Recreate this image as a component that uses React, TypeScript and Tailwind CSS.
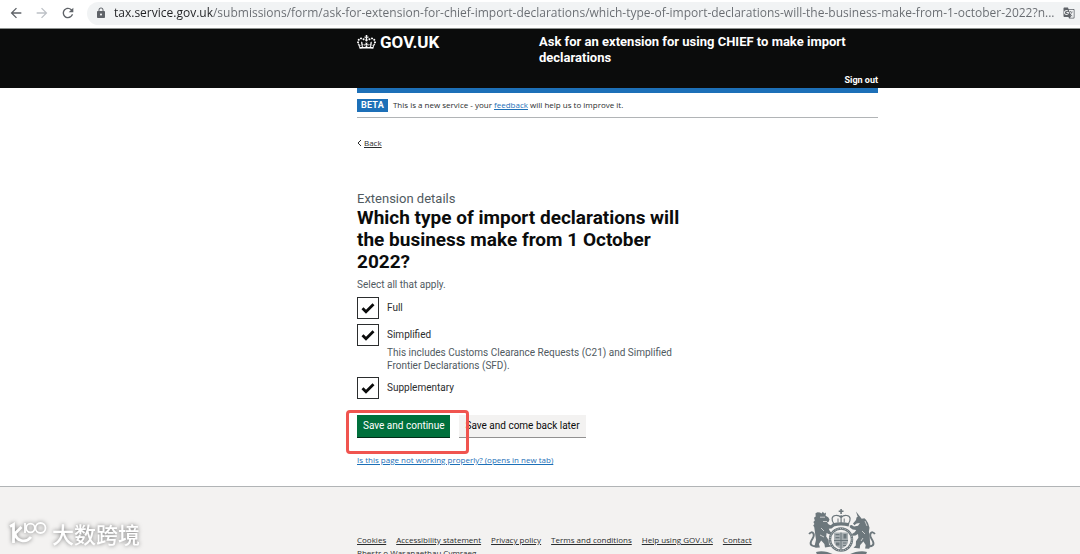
import { useState, type ReactNode } from 'react';
import { MdArrowBack, MdArrowForward, MdGTranslate, MdLock, MdRefresh } from 'react-icons/md';

interface ImportType {
  id: string;
  label: string;
  hint?: string;
}

const importTypes: ImportType[] = [
  { id: 'full', label: 'Full' },
  {
    id: 'simplified',
    label: 'Simplified',
    hint: 'This includes Customs Clearance Requests (C21) and Simplified Frontier Declarations (SFD).',
  },
  { id: 'supplementary', label: 'Supplementary' },
];

const footerLinks = [
  'Cookies',
  'Accessibility statement',
  'Privacy policy',
  'Terms and conditions',
  'Help using GOV.UK',
  'Contact',
];

function Container({ children }: { children: ReactNode }) {
  return (
    <div className="grid grid-cols-[357fr_521fr_202fr]">
      <div className="col-start-2 min-w-0">{children}</div>
    </div>
  );
}

function GovCrown() {
  return (
    <svg viewBox="0 0 132 97" className="h-[14px] w-[19px] shrink-0" fill="currentColor" aria-hidden="true">
      <path d="M25 30.2c3.5 1.5 7.7-.2 9.1-3.7 1.5-3.6-.2-7.8-3.9-9.2-3.6-1.4-7.6.3-9.1 3.9-1.4 3.5.3 7.5 3.9 9zM9 39.5c3.6 1.5 7.8-.2 9.2-3.7 1.5-3.6-.2-7.8-3.9-9.1-3.6-1.5-7.6.2-9.1 3.8-1.4 3.5.3 7.5 3.8 9zM4.4 57.2c3.5 1.5 7.7-.2 9.1-3.8 1.5-3.6-.2-7.7-3.9-9.1-3.5-1.5-7.6.3-9.1 3.8-1.4 3.5.3 7.6 3.9 9.1zm38.3-21.4c3.5 1.5 7.7-.2 9.1-3.8 1.5-3.6-.2-7.7-3.9-9.1-3.6-1.5-7.6.3-9.1 3.8-1.3 3.6.4 7.7 3.9 9.1zm64.4-5.6c-3.6 1.5-7.8-.2-9.1-3.7-1.5-3.6.2-7.8 3.8-9.2 3.6-1.4 7.7.3 9.2 3.9 1.3 3.5-.4 7.5-3.9 9zm15.9 9.3c-3.6 1.5-7.7-.2-9.1-3.7-1.5-3.6.2-7.8 3.7-9.1 3.6-1.5 7.7.2 9.2 3.8 1.5 3.5-.3 7.5-3.8 9zm4.7 17.7c-3.6 1.5-7.8-.2-9.2-3.8-1.5-3.6.2-7.7 3.9-9.1 3.6-1.5 7.7.3 9.2 3.8 1.3 3.5-.4 7.6-3.9 9.1zM89.3 35.8c-3.6 1.5-7.8-.2-9.2-3.8-1.4-3.6.2-7.7 3.9-9.1 3.6-1.5 7.7.3 9.2 3.8 1.4 3.6-.3 7.7-3.9 9.1zM69.7 17.7l8.9 4.7V9.3l-8.9 2.8c-.2-.3-.5-.6-.9-.9L72.4 0H59.6l3.5 11.2c-.3.3-.6.5-.9.9l-8.8-2.8v13.1l8.8-4.7c.3.3.6.7.9.9l-5 15.4v.1c-.2.8-.4 1.6-.4 2.4 0 4.1 3.1 7.5 7 8.1h.2c.3 0 .7.1 1 .1.4 0 .7 0 1-.1h.2c4-.6 7.1-4.1 7.1-8.1 0-.8-.1-1.7-.4-2.4V34l-5.1-15.4c.4-.2.7-.6 1-.9zM66 92.8c16.9 0 32.8 1.1 47.1 3.2 4-16.9 8.9-26.7 14-33.5l-9.6-3.4c1 4.9 1.1 7.2 0 10.2-1.5-1.4-3-4.3-4.2-8.7L108.6 76c2.8-2 5-3.2 7.5-3.3-4.4 9.4-10 11.9-13.6 11.2-4.3-.8-6.3-4.6-5.6-7.9 1-4.7 5.7-5.9 8-.5 4.3-8.7-3-11.4-7.6-8.8 7.1-7.2 7.9-13.5 2.1-21.1-8 6.1-8.1 12.3-4.5 20.8-4.7-5.4-12.1-2.5-9.5 6.2 3.4-5.2 7.9-2 7.2 3.1-.6 4.3-6.4 7.8-13.5 7.2-10.3-.9-10.9-8-11.2-13.8 2.5-.5 7.1 1.8 11 7.3L80.2 60c-4.1 4.4-8 5.3-12.3 5.4 1.4-4.4 8-11.6 8-11.6H55.5s6.4 7.2 7.9 11.6c-4.2-.1-8-1-12.3-5.4l1.4 16.4c3.9-5.5 8.5-7.7 10.9-7.3-.3 5.8-.9 12.8-11.1 13.8-7.2.6-12.9-2.9-13.5-7.2-.7-5 3.8-8.3 7.1-3.1 2.7-8.7-4.6-11.6-9.4-6.2 3.7-8.5 3.6-14.7-4.6-20.8-5.8 7.6-5 13.9 2.2 21.1-4.7-2.6-11.9.1-7.7 8.8 2.3-5.5 7.1-4.2 8.1.5.7 3.3-1.3 7.1-5.7 7.9-3.5.7-9-1.8-13.5-11.2 2.5.1 4.7 1.3 7.5 3.3l-4.7-15.4c-1.2 4.4-2.7 7.2-4.3 8.7-1.1-3-.9-5.3 0-10.2l-9.5 3.4c5 6.9 9.9 16.7 14 33.5 14.8-2.1 30.8-3.2 47.7-3.2z" />
    </svg>
  );
}

function RoyalArms() {
  return (
    <svg viewBox="0 0 68 54" className="mr-[2px] h-[54px] w-[68px] shrink-0" fill="#6c777c" aria-hidden="true">
      {/* crown */}
      <path d="M32.3 0h1.6v1.400h1.600v1.600h-1.600v2h-1.600v-2h-1.600V1.400h1.600z" />
      <path
        d="M26 15c-3-4-2.500-8 1.500-8.500 2.500-.3 4.300.6 5.600 2 1.300-1.400 3.100-2.300 5.600-2 4 .5 4.500 4.500 1.500 8.500M33.100 6v9"
        fill="none"
        stroke="#6c777c"
        strokeWidth="1.200"
      />
      <path d="M30 9.500v4M36.200 9.500v4" fill="none" stroke="#6c777c" strokeWidth="1" />
      <path d="M24.800 14.200c5.500-1.400 11.100-1.400 16.600 0l-.8 3.200c-5-1.100-10-1.100-15 0z" />
      {/* lion */}
      <path
        transform="translate(2 0)"
        d="M10 3.500l1.500 1 1.300-1.700 1.500 1.700 1.700-1-.4 3.200 2.600 1.600 1.300 2.300-.8 2.200-1.700.6 1.800 2.100 2 .7 2-1.700 1.600.7-.4 2.200-2.400 2-2.800.3 1 2.200 1.400 1.600-.6 2-2-.4-2-1.200-.4 3.600 2.400 3.600.4 4.300 2.300 2.200-6.300.8-.6-3.400-3.200-3.600-2.300 3.700 1 3.300-4.500.4-.7-2.400 1.300-5.700-.6-4-.6-4.600-.6-4.100-1-1.400 1.200-1.500-1-2.200 1.400-1.500-.8-2.600 1.700-1.400-.2-3.200 2-1z"
      />
      <path d="M12 8.200h5M15 12.500h4M13 19l3 3M12 26l4 2" fill="none" stroke="#f3f2f1" strokeWidth=".7" />
      <path
        d="M10 36.500c-5 2-8.500-.5-7-4 1.300-3 4-5 2.500-8-1-1.700-3.200-1.600-4.300.6"
        fill="none"
        stroke="#6c777c"
        strokeWidth="1.900"
      />
      {/* unicorn */}
      <path d="M48 2.500l5.700 7.300 2.700-.6 1.600 1.600 2 3.200 1.500 4.700-.6 4 .8 4.200.2 4.300.5 6-1.300 2.600-4-.3.600-3.500-2.300-3.600-3.200 3.500-.5 3.500-6.200-.7 2.300-2.200.2-4.200 2.400-3.500-.4-3.800-2.500 1.600-3 .2-.5-1.900 2.700-1.600 1.500-2.300-3.500-.4-2.800-2.100-.2-2 2-.4 2.300 1.500 4-.9 1.900-2.700-3.300.6-2.200 1.600-1.400-1.700 3-3.600.5-2.400 1.200-.7z" />
      <path d="M57 12l2 5M54 22l3 3M55 29l-2 3" fill="none" stroke="#f3f2f1" strokeWidth=".7" />
      <path
        d="M59 36.500c5 2 7.500-.5 6-4-1.300-3-4-5-2.500-8 1-1.700 3.200-1.600 4.300.6"
        fill="none"
        stroke="#6c777c"
        strokeWidth="1.900"
      />
      {/* garter and shield */}
      <circle cx="33" cy="30.500" r="11" fill="#f3f2f1" stroke="#6c777c" strokeWidth="2.400" />
      <circle cx="33" cy="30.500" r="11" fill="none" stroke="#c9cdce" strokeWidth="1" strokeDasharray="1 1.400" />
      <path d="M26 23.500h14v9c0 3.500-3 5.500-7 7.500-4-2-7-4-7-7.500z" fill="#a7aeb1" />
      <path d="M32.500 23.500h1v16.500h-1zM26 31h14v1H26zM27.500 25h4v1.200h-4zM27.500 28h4v1.200h-4zM35.500 25h3v4.500h-3zM28 33.500h3.500v3H28zM35 33.500h3.500v1H35zM35 36h3v1h-3z" />
      {/* compartment */}
      <path d="M8 43c8-2 14 1 19 3s9 2 13 0 12-5 19-3l-2 5c-7-1-11 2-16 4-5 1.500-9 1-14-1-5-2.500-11-4-17-3z" />
    </svg>
  );
}

function BrowserBar() {
  return (
    <div className="flex h-[29px] shrink-0 items-center border-b border-[#8d918f] bg-white pb-[2px] pl-2 text-[#5f6368]">
      <button type="button" aria-label="Back" className="flex w-[26px] justify-start">
        <MdArrowBack className="size-4" />
      </button>
      <button type="button" aria-label="Forward" className="flex w-[26px] justify-start text-[#bdc1c6]">
        <MdArrowForward className="size-4" />
      </button>
      <button type="button" aria-label="Reload" className="flex w-[27px] justify-start">
        <MdRefresh className="size-4" />
      </button>
      <div className="flex h-[23px] min-w-0 flex-1 items-center rounded-l-full bg-[#f1f3f4] pl-2">
        <MdLock className="size-3 shrink-0" />
        <input
          aria-label="Address"
          readOnly
          className="ml-[7px] min-w-0 flex-1 bg-[linear-gradient(to_right,#202124_99px,#676b70_99px)] bg-clip-text font-['Open_Sans',sans-serif] text-[12px] text-transparent outline-none"
          value="tax.service.gov.uk/submissions/form/ask-for-extension-for-chief-import-declarations/which-type-of-import-declarations-will-the-business-make-from-1-october-2022?n..."
        />
        <button type="button" aria-label="Translate this page" className="ml-1 mr-[5px]">
          <MdGTranslate className="size-3" />
        </button>
      </div>
    </div>
  );
}

function ImportCheckbox({ item }: { item: ImportType }) {
  const [checked, setChecked] = useState(true);

  return (
    <div className="flex gap-2">
      <div className="grid size-[22px] shrink-0 place-items-center">
        <input
          id={item.id}
          type="checkbox"
          checked={checked}
          onChange={(e) => setChecked(e.target.checked)}
          aria-describedby={item.hint ? `${item.id}-hint` : undefined}
          className="col-start-1 row-start-1 size-[22px] appearance-none border border-[#2b2d2e] bg-white"
        />
        {checked && (
          <svg viewBox="0 0 14 12" className="pointer-events-none col-start-1 row-start-1 h-3 w-[14px]" aria-hidden="true">
            <path d="M1.500 6.200l3.500 3.500 7.500-7.500" fill="none" stroke="#0b0c0c" strokeWidth="2.800" />
          </svg>
        )}
      </div>
      <div className="min-w-0">
        <label htmlFor={item.id} className="block text-[10px] leading-[22px] text-[#2b2d2e]">
          {item.label}
        </label>
        {item.hint && (
          <p id={`${item.id}-hint`} className="text-[10px] leading-[13px] text-[#505a5f]">
            {item.hint}
          </p>
        )}
      </div>
    </div>
  );
}

function Watermark() {
  return (
    <div className="absolute bottom-2 left-2 flex items-center gap-1 text-white drop-shadow-[0_0_2px_#777]">
      <svg viewBox="0 0 40 26" className="h-[26px] w-10" fill="none" stroke="currentColor" aria-hidden="true">
        <path d="M2 6.500l3.500-2V23M13.500 7L7 13.500c1 6.500 10 11 16 3.500" strokeWidth="2.800" />
        <path d="M17 3v10" strokeWidth="1.800" />
        <circle cx="22.500" cy="8" r="4.300" strokeWidth="1.800" />
        <circle cx="32.500" cy="8" r="5" strokeWidth="1.800" />
      </svg>
      <span className="font-['Noto_Sans_CJK_SC',sans-serif] text-[22px] font-medium leading-6">大数跨境</span>
    </div>
  );
}

export default function App() {
  return (
    <div className="relative flex h-screen flex-col overflow-hidden bg-white font-[Roboto,sans-serif] text-[#0b0c0c]">
      <BrowserBar />

      <header className="shrink-0 bg-[#0b0c0c] text-white">
        <Container>
          <div className="grid grid-cols-[182fr_339fr] pt-[5px]">
            <a href="#" className="flex h-4 items-center gap-1 text-[17px] font-bold leading-4">
              <GovCrown />
              GOV.UK
            </a>
            <div>
              <a href="#" className="block w-[320px] text-[13px] font-bold leading-4">
                Ask for an extension for using CHIEF to make import declarations
              </a>
              <div className="flex justify-end pb-[2px] pt-2">
                <a href="#" className="text-[9px] font-bold leading-3">
                  Sign out
                </a>
              </div>
            </div>
          </div>
        </Container>
      </header>

      <div className="flex-1">
        <Container>
          <div className="h-[5px] bg-[#1d70b8]" />
          <div className="flex h-[25px] items-center gap-[5px] border-b border-[#b1b4b6]">
            <strong className="bg-[#1d70b8] px-1 text-[9px] font-bold leading-[13px] tracking-wide text-white">BETA</strong>
            <span className="font-['Open_Sans',sans-serif] text-[8px] leading-3 text-[#2b2d2e]">
              This is a new service - your{' '}
              <a href="#" className="text-[#1d70b8] underline">
                feedback
              </a>{' '}
              will help us to improve it.
            </span>
          </div>

          <a
            href="#"
            className="mt-[19px] flex w-fit items-center gap-[2px] font-['Open_Sans',sans-serif] text-[8px] leading-3 text-[#2b2d2e]"
          >
            <svg viewBox="0 0 5 8" className="h-2 w-[5px]" fill="none" stroke="currentColor" aria-hidden="true">
              <path d="M4 1L1 4l3 3" />
            </svg>
            <span className="underline">Back</span>
          </a>

          <main className="w-2/3 pt-[42px]">
            <form onSubmit={(e) => e.preventDefault()}>
              <fieldset>
                <legend>
                  <span className="block text-[13px] leading-4 text-[#505a5f]">Extension details</span>
                  <h1 className="text-[19px] font-bold leading-[22px]">
                    Which type of import declarations will the business make from 1 October 2022?
                  </h1>
                </legend>
                <p className="mt-1 text-[10px] leading-4 text-[#505a5f]">Select all that apply.</p>
                <div className="mt-1 flex flex-col gap-[5px]">
                  {importTypes.map((item) => (
                    <ImportCheckbox key={item.id} item={item} />
                  ))}
                </div>
              </fieldset>

              <div className="relative mt-4 flex w-fit gap-[9px]">
                <button
                  type="submit"
                  className="bg-[#00703c] px-[6px] text-[10px] leading-[22px] text-white shadow-[0_1px_0_#002d18]"
                >
                  Save and continue
                </button>
                <button
                  type="button"
                  className="bg-[#f3f2f1] px-[6px] text-[10px] leading-[22px] shadow-[0_1px_0_#929191]"
                >
                  Save and come back later
                </button>
                <div className="pointer-events-none absolute -left-[11px] -top-[5px] h-11 w-[123px] rounded-[4px] border-[3px] border-[#f0544f]" />
              </div>
            </form>
            <a
              href="#"
              className="mt-[17px] block w-fit font-['Open_Sans',sans-serif] text-[8px] leading-3 text-[#1d70b8] underline"
            >
              Is this page not working properly? (opens in new tab)
            </a>
          </main>
        </Container>
      </div>

      <footer className="h-[68px] shrink-0 border-t border-[#b1b4b6] bg-[#f3f2f1]">
        <Container>
          <div className="flex items-start justify-between pt-[22px]">
            <div className="pt-6 font-['Open_Sans',sans-serif] text-[8px] leading-[13px] text-[#2b2d2e]">
              <ul className="flex gap-[10px] whitespace-nowrap">
                {footerLinks.map((text) => (
                  <li key={text}>
                    <a href="#" className="underline">
                      {text}
                    </a>
                  </li>
                ))}
              </ul>
              <a href="#" className="underline">
                Rhestr o Wasanaethau Cymraeg
              </a>
            </div>
            <RoyalArms />
          </div>
        </Container>
      </footer>

      <Watermark />
    </div>
  );
}
